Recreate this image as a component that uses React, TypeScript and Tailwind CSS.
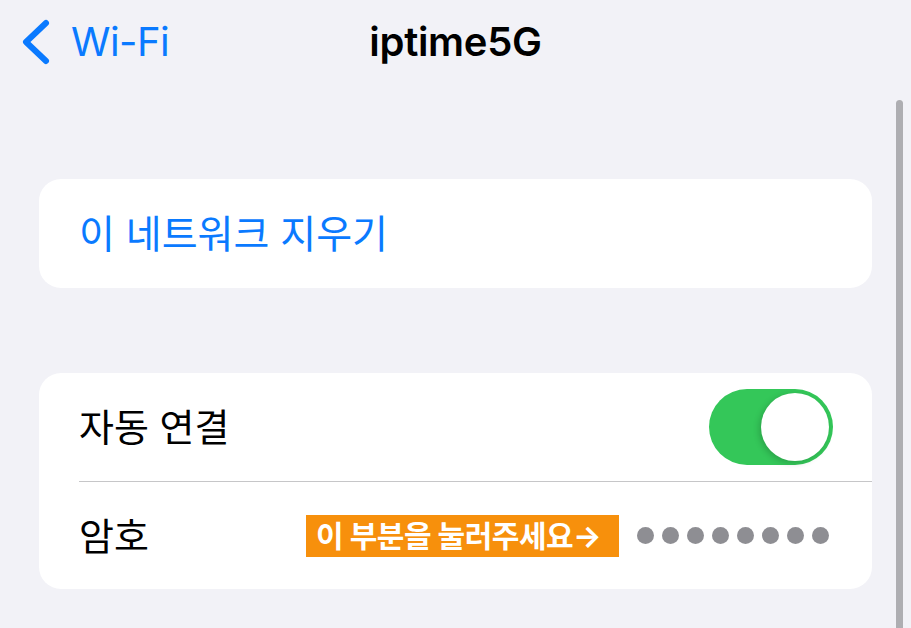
import React from 'react';

const font = { fontFamily: '"Inter", "Noto Sans CJK KR", sans-serif' };

function Toggle() {
  return (
    <div className="w-[124px] h-[76px] rounded-full bg-[#34c759] p-[4px] flex justify-end">
      <div className="w-[68px] h-[68px] rounded-full bg-white shadow-[-2px_2px_6px_rgba(0,0,0,0.18)]" />
    </div>
  );
}

export default function App() {
  return (
    <div className="relative w-[911px] h-[628px] overflow-hidden bg-[#f2f2f7]" style={font}>
      {/* nav bar */}
      <div className="grid grid-cols-[1fr_auto_1fr] items-center h-[84px]">
        <div className="flex items-center pl-[20px] gap-[19px] text-[#0a7aff]">
          <svg width="32" height="48" viewBox="0 0 32 48" fill="none">
            <path d="M26 5 L6 24 L26 43" stroke="#0a7aff" strokeWidth="6" strokeLinecap="round" strokeLinejoin="round" />
          </svg>
          <span className="text-[40px] leading-none font-normal tracking-[-0.5px]">Wi-Fi</span>
        </div>
        <div className="text-[40px] leading-none font-semibold text-black tracking-[-0.3px]">iptime5G</div>
        <div />
      </div>

      <div className="pl-[39px] pt-[95px] w-[911px]">
        {/* card 1 */}
        <div className="h-[109px] w-[833px] rounded-[22px] bg-white flex items-center pl-[40px]">
          <span className="text-[39px] leading-none text-[#0a7aff]">이 네트워크 지우기</span>
        </div>

        {/* card 2 */}
        <div className="mt-[85px] w-[833px] rounded-[22px] bg-white flex flex-col">
          <div className="h-[108px] flex items-center justify-between pl-[40px] pr-[39px]">
            <span className="text-[38px] leading-none text-black">자동 연결</span>
            <Toggle />
          </div>
          <div className="ml-[40px] h-px bg-[#c6c6c8]" />
          <div className="h-[107px] flex items-center pl-[40px] pr-[43px]">
            <span className="w-[227px] text-[38px] leading-none text-black">암호</span>
            <div className="h-[42px] pl-[10px] pr-[18px] bg-[#f7900c] flex items-center">
              <span className="text-[30px] leading-none font-bold text-white tracking-[-0.5px]">이 부분을 눌러주세요→</span>
            </div>
            <div className="ml-auto flex items-center gap-[8px]">
              {[0, 1, 2, 3, 4, 5, 6, 7].map((i) => (
                <span key={i} className="w-[17px] h-[17px] rounded-full bg-[#8e8e93]" />
              ))}
            </div>
          </div>
        </div>
      </div>

      {/* scroll indicator */}
      <div className="absolute left-[896px] top-[100px] w-[7px] h-[540px] rounded-full bg-[#aeaeb2]" />
    </div>
  );
}
